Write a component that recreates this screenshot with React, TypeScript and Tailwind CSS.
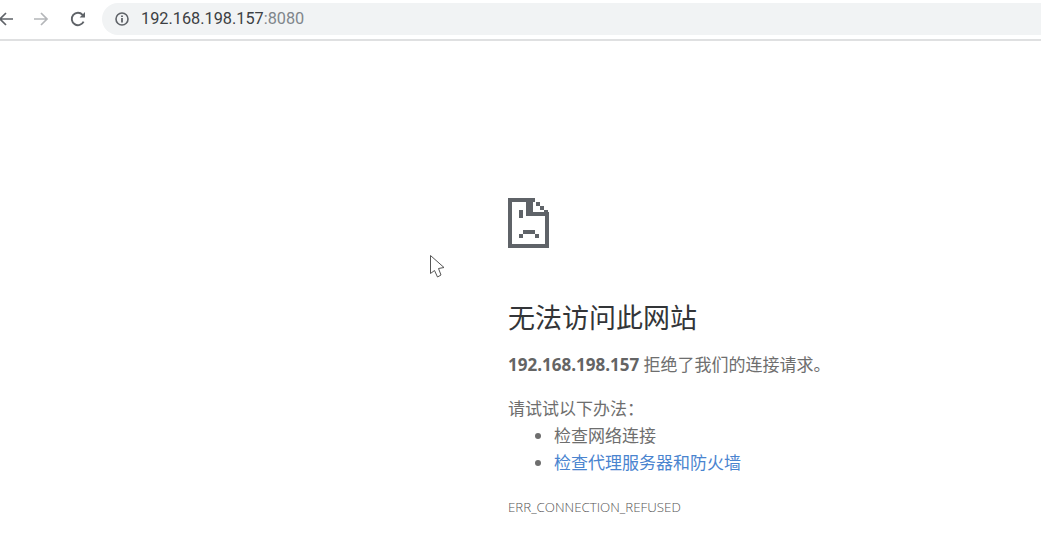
const cjk = "font-['Open_Sans','Noto_Sans_CJK_SC',sans-serif]"

function SadTab() {
  return (
    <svg width="42" height="50" viewBox="0 0 42 50" fill="#5f6368" className="block">
      <path d="M0 0H27V4H22V14H41V50H0ZM4 4V46H37V18H21L18 18V4Z" fillRule="evenodd" />
      <path d="M21 0h4v18h-4zM28 4h4v4h-4zM32 8h4v4h-4zM36 12h4v4h-4z" />
      <path d="M11 12h4v8h-4zM15 32h12v4H15zM11 36h4v4h-4zM27 36h4v4h-4z" />
    </svg>
  )
}

function Cursor() {
  return (
    <svg width="16" height="24" viewBox="0 0 16 24" fill="none" className="block">
      <path d="M1.5 1.5V19.5L5.5 16.5L8.5 23L12 21L9.5 14.5L15 13.5Z" fill="#fff" stroke="#555" strokeWidth="1" />
    </svg>
  )
}

export default function App() {
  return (
    <div className={`relative h-[560px] w-[1041px] overflow-hidden bg-white ${cjk}`}>
      <div className="flex h-[41px] items-center border-b-2 border-[#dfe0e1] pb-[1px]">
        <svg width="16" height="16" viewBox="0 0 16 16" fill="none" className="ml-[-2px]">
          <path d="M15 8H2M8 2L2 8l6 6" stroke="#5f6368" strokeWidth="1.7" />
        </svg>
        <svg width="16" height="16" viewBox="0 0 16 16" fill="none" className="ml-[19px]">
          <path d="M1 8h13M8 2l6 6-6 6" stroke="#b4b6b9" strokeWidth="1.7" />
        </svg>
        <svg width="18" height="18" viewBox="0 0 18 18" fill="none" className="ml-[20px]">
          <path d="M14.6 11.6A6.2 6.2 0 1 1 13.6 4.8L15.5 6.6" stroke="#5f6368" strokeWidth="1.9" />
          <path d="M16 2V7.4H10.6Z" fill="#5f6368" />
        </svg>
        <div className="ml-[15px] flex h-[32px] flex-1 items-center rounded-l-full bg-[#f1f3f4] pl-[12px]">
          <svg width="16" height="16" viewBox="0 0 16 16" fill="none">
            <circle cx="8" cy="8" r="6" stroke="#5f6368" strokeWidth="1.6" />
            <path d="M7.1 7h1.8v4.4H7.1zM7.1 4.6h1.8v1.5H7.1z" fill="#5f6368" />
          </svg>
          <span className="ml-[11px] font-['Roboto',sans-serif] text-[16.3px] text-[#3c4043]">
            192.168.198.157<span className="text-[#80868b]">:8080</span>
          </span>
        </div>
      </div>

      <main className="ml-[508px] pt-[157px]">
        <SadTab />
        <h1 className="mt-[52px] text-[27px] leading-[36px] font-normal text-[#333538]">无法访问此网站</h1>
        <p className="mt-[16px] text-[17px] leading-[26px] text-[#6e6e6e]">
          <b className="font-bold text-[#646464]">192.168.198.157</b> 拒绝了我们的连接请求。
        </p>
        <p className="mt-[17px] text-[17px] leading-[27px] text-[#6e6e6e]">请试试以下办法：</p>
        <ul className="list-disc pl-[46px] text-[17px] leading-[27px] text-[#6e6e6e]">
          <li>检查网络连接</li>
          <li>
            <a className="text-[#4a84cf]">检查代理服务器和防火墙</a>
          </li>
        </ul>
        <p className="mt-[22px] text-[13.3px] leading-[18px] font-light text-[#555555]">ERR_CONNECTION_REFUSED</p>
      </main>

      <div className="absolute top-[254px] left-[429px]">
        <Cursor />
      </div>
    </div>
  )
}
